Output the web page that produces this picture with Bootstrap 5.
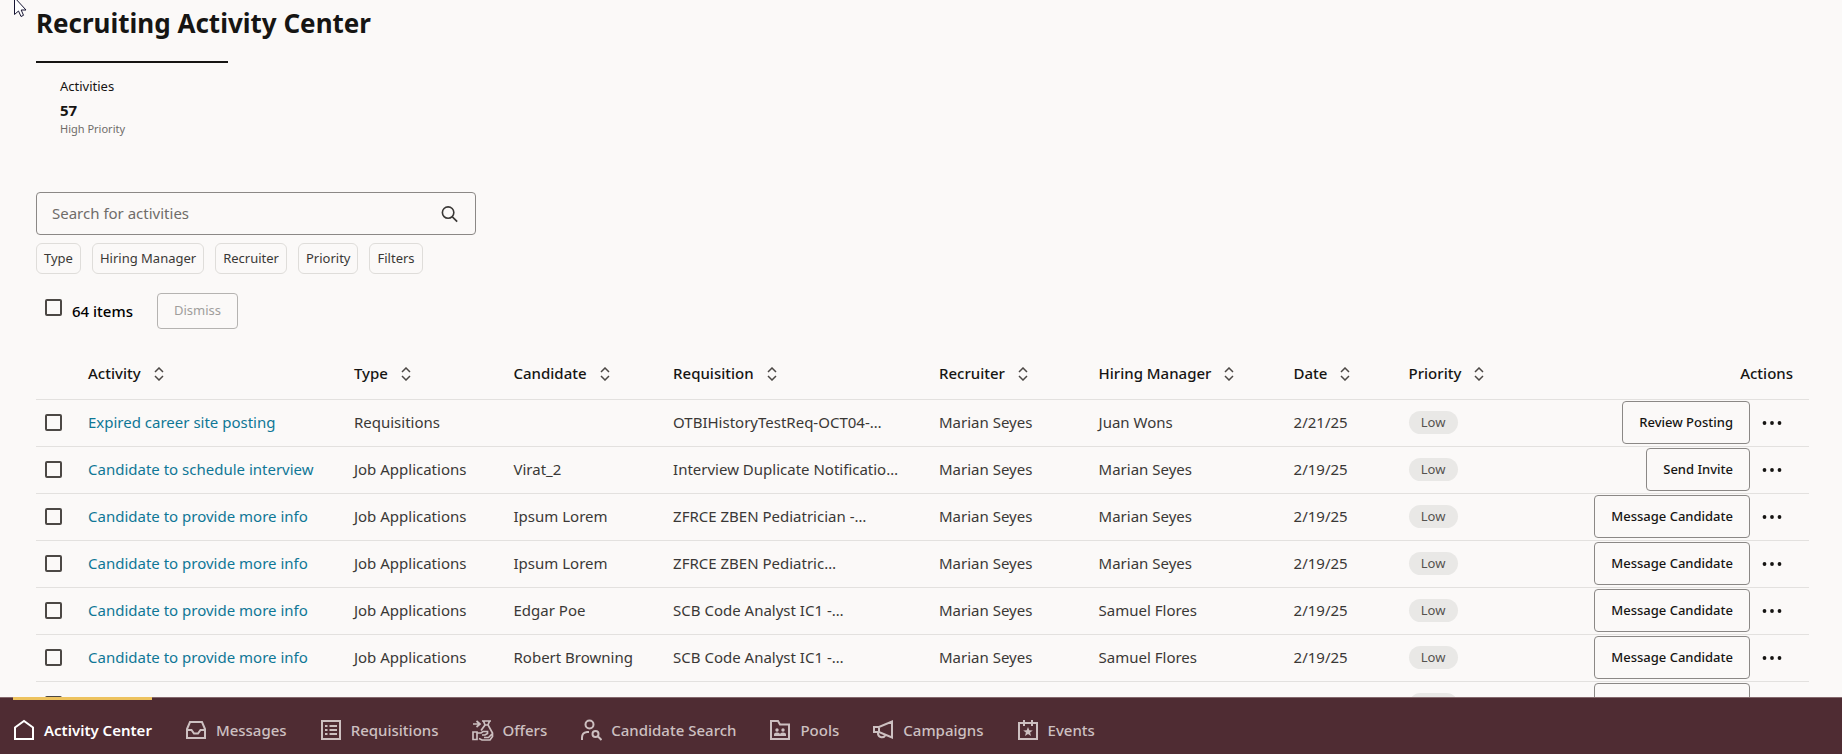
<!DOCTYPE html>
<html lang="en">
<head>
<meta charset="utf-8">
<meta name="viewport" content="width=device-width, initial-scale=1">
<title>Recruiting Activity Center</title>
<link href="https://cdn.jsdelivr.net/npm/bootstrap@5.3.0/dist/css/bootstrap.min.css" rel="stylesheet">
<style>
  body { font-family: "Noto Sans", "Open Sans", sans-serif; font-size: 15px; line-height: 20px; color: #161513; background: #fbf9f8; }
  main { padding: 5px 33px 0 36px; min-height: 0; }
  .page-title { font-size: 26px; line-height: 36px; font-weight: 700; margin-bottom: 20px; }
  .metric { width: 192px; border-top: 2px solid #161513; padding: 13px 24px 0; margin-bottom: 55px; }
  .metric-label { font-size: 13px; line-height: 20px; }
  .metric-value { font-size: 15px; line-height: 20px; font-weight: 700; margin-top: 4px; }
  .metric-note { font-size: 11px; line-height: 16px; margin-top: 1px; color: #6f6c69; }
  .search-box { width: 440px; max-width: 100%; height: 43px; border: 1px solid #8b8886; border-radius: 4px; padding: 0 16px 0 15px; margin-bottom: 8px; }
  .search-box input { font-size: 15px; background: transparent; color: #161513; }
  .search-box input::placeholder { color: #6f6c69; opacity: 1; }
  .search-box svg { width: 20px; height: 20px; }
  .chips { gap: 11px; margin-bottom: 19px; }
  .chip { height: 31px; padding: 0 7px; font-size: 13px; color: #3a3836; border: 1px solid #dfddda; border-radius: 6px; }
  .bulk { padding-left: 9px; margin-bottom: 20px; }
  .tick { appearance: none; display: block; width: 17px; height: 17px; margin: 0; border: 2px solid #4c4845; border-radius: 2px; background: transparent; }
  .tick:checked { background: #4c4845; }
  .bulk .tick { margin-bottom: 8px; }
  .bulk label { font-weight: 500; margin: 0 24px 0 10px; color: #000; }
  .btn-line { height: 43px; padding: 0 16px; font-size: 13px; font-weight: 500; color: #161513; border: 1px solid #8b8886; border-radius: 4px; }
  .btn-line:disabled { height: 36px; font-weight: 400; color: #a09e9c; border-color: #b5b3b1; opacity: 1; }
  .activity-grid { table-layout: fixed; min-width: 1240px; margin: 0; --bs-table-bg: transparent; --bs-table-color: #3a3836; color: #3a3836; }
  .activity-grid > :not(caption) > * > * { padding: 0 16px 2px; height: 47px; vertical-align: middle; border-bottom: 1px solid #e3e1df; white-space: nowrap; }
  .activity-grid > thead > tr > th { height: 50px; font-weight: 500; color: #161513; }
  .activity-grid > tbody > tr > td:first-child { padding: 0 9px; }
  .activity-grid > tbody > tr > td:nth-child(9) { padding-bottom: 0; }
  .activity-grid > tbody > tr > td:last-child { padding: 0 15px 0 0; }
  .activity-grid a { color: #0f7796; text-decoration: none; }
  .sort { width: 10px; height: 14px; margin-left: 9px; padding: 0; border: 0; background: none; display: inline-flex; vertical-align: -2px; }
  .level { display: block; width: 49px; height: 23px; text-align: center; border-radius: 12px; font-size: 13px; line-height: 23px; background: #e9e8e6; color: #55524f; }
  .more { display: flex; align-items: center; justify-content: center; border: 0; background: none; padding: 0; width: 44px; height: 43px; }
  .bottom-nav { height: 57px; flex: none; background: #4f2c33; border-top: 1px solid #85696d; padding-left: 13px; gap: 33px; }
  .bottom-nav a { position: relative; color: #cdc0c1; font-weight: 500; text-decoration: none; gap: 9px; padding-top: 7px; }
  .bottom-nav a.active { color: #fff; font-weight: 600; }
  .bottom-nav a.active::before { content: ""; position: absolute; left: 0; right: 0; top: -1px; height: 3px; background: #edc25e; }
  .bottom-nav svg { width: 22px; height: 22px; }
  .pointer { position: absolute; left: 14px; top: -3px; }
</style>
</head>
<body class="vh-100 d-flex flex-column overflow-hidden">

<svg class="d-none" aria-hidden="true">
  <symbol id="sort" viewBox="0 0 10 14"><path d="M1 5l4-4 4 4M1 9l4 4 4-4" fill="none" stroke="#4c4845" stroke-width="1.5"/></symbol>
  <symbol id="dots" viewBox="0 0 20 6"><circle cx="2.500" cy="3" r="1.900" fill="#161513"/><circle cx="10" cy="3" r="1.900" fill="#161513"/><circle cx="17.500" cy="3" r="1.900" fill="#161513"/></symbol>
</svg>

<main class="flex-grow-1 overflow-hidden">
  <h1 class="page-title">Recruiting Activity Center</h1>

  <section class="metric">
    <div class="metric-label">Activities</div>
    <div class="metric-value">57</div>
    <div class="metric-note">High Priority</div>
  </section>

  <div class="search-box d-flex align-items-center">
    <input class="form-control border-0 shadow-none p-0" type="text" placeholder="Search for activities" aria-label="Search for activities">
    <svg viewBox="0 0 20 20" fill="none" stroke="#3a3836" stroke-width="1.7" aria-hidden="true"><circle cx="8.500" cy="8.500" r="6"/><path d="M13 13l5 5"/></svg>
  </div>

  <div class="chips d-flex flex-wrap">
    <button type="button" class="btn chip">Type</button>
    <button type="button" class="btn chip">Hiring Manager</button>
    <button type="button" class="btn chip">Recruiter</button>
    <button type="button" class="btn chip">Priority</button>
    <button type="button" class="btn chip">Filters</button>
  </div>

  <div class="bulk d-flex align-items-center">
    <input class="tick" type="checkbox" id="all-items">
    <label for="all-items">64 items</label>
    <button type="button" class="btn btn-line" disabled>Dismiss</button>
  </div>

  <table class="table activity-grid">
    <colgroup>
      <col style="width:36px"><col style="width:15%"><col style="width:9%"><col style="width:9%"><col style="width:15%"><col style="width:9%"><col style="width:11%"><col style="width:115px"><col>
      <col style="width:240px">
    </colgroup>
    <thead>
      <tr>
        <th class="p-0" aria-label="Select"></th>
        <th scope="col">Activity <button class="sort" aria-label="Sort by activity"><svg width="10" height="14"><use href="#sort"/></svg></button></th>
        <th scope="col">Type <button class="sort" aria-label="Sort by type"><svg width="10" height="14"><use href="#sort"/></svg></button></th>
        <th scope="col">Candidate <button class="sort" aria-label="Sort by candidate"><svg width="10" height="14"><use href="#sort"/></svg></button></th>
        <th scope="col">Requisition <button class="sort" aria-label="Sort by requisition"><svg width="10" height="14"><use href="#sort"/></svg></button></th>
        <th scope="col">Recruiter <button class="sort" aria-label="Sort by recruiter"><svg width="10" height="14"><use href="#sort"/></svg></button></th>
        <th scope="col">Hiring Manager <button class="sort" aria-label="Sort by hiring manager"><svg width="10" height="14"><use href="#sort"/></svg></button></th>
        <th scope="col">Date <button class="sort" aria-label="Sort by date"><svg width="10" height="14"><use href="#sort"/></svg></button></th>
        <th scope="col">Priority <button class="sort" aria-label="Sort by priority"><svg width="10" height="14"><use href="#sort"/></svg></button></th>
        <th scope="col" class="text-end">Actions</th>
      </tr>
    </thead>
    <tbody>
      <tr>
        <td><input class="tick" type="checkbox" aria-label="Select row 1"></td>
        <td><a href="#">Expired career site posting</a></td><td>Requisitions</td><td></td><td>OTBIHistoryTestReq-OCT04-…</td><td>Marian Seyes</td><td>Juan Wons</td><td>2/21/25</td>
        <td><span class="level">Low</span></td>
        <td><div class="d-flex justify-content-end"><button type="button" class="btn btn-line">Review Posting</button><button type="button" class="more" aria-label="More actions"><svg width="20" height="6"><use href="#dots"/></svg></button></div></td>
      </tr>
      <tr>
        <td><input class="tick" type="checkbox" aria-label="Select row 2"></td>
        <td><a href="#">Candidate to schedule interview</a></td><td>Job Applications</td><td>Virat_2</td><td>Interview Duplicate Notificatio…</td><td>Marian Seyes</td><td>Marian Seyes</td><td>2/19/25</td>
        <td><span class="level">Low</span></td>
        <td><div class="d-flex justify-content-end"><button type="button" class="btn btn-line">Send Invite</button><button type="button" class="more" aria-label="More actions"><svg width="20" height="6"><use href="#dots"/></svg></button></div></td>
      </tr>
      <tr>
        <td><input class="tick" type="checkbox" aria-label="Select row 3"></td>
        <td><a href="#">Candidate to provide more info</a></td><td>Job Applications</td><td>Ipsum Lorem</td><td>ZFRCE ZBEN Pediatrician -…</td><td>Marian Seyes</td><td>Marian Seyes</td><td>2/19/25</td>
        <td><span class="level">Low</span></td>
        <td><div class="d-flex justify-content-end"><button type="button" class="btn btn-line">Message Candidate</button><button type="button" class="more" aria-label="More actions"><svg width="20" height="6"><use href="#dots"/></svg></button></div></td>
      </tr>
      <tr>
        <td><input class="tick" type="checkbox" aria-label="Select row 4"></td>
        <td><a href="#">Candidate to provide more info</a></td><td>Job Applications</td><td>Ipsum Lorem</td><td>ZFRCE ZBEN Pediatric…</td><td>Marian Seyes</td><td>Marian Seyes</td><td>2/19/25</td>
        <td><span class="level">Low</span></td>
        <td><div class="d-flex justify-content-end"><button type="button" class="btn btn-line">Message Candidate</button><button type="button" class="more" aria-label="More actions"><svg width="20" height="6"><use href="#dots"/></svg></button></div></td>
      </tr>
      <tr>
        <td><input class="tick" type="checkbox" aria-label="Select row 5"></td>
        <td><a href="#">Candidate to provide more info</a></td><td>Job Applications</td><td>Edgar Poe</td><td>SCB Code Analyst IC1 -…</td><td>Marian Seyes</td><td>Samuel Flores</td><td>2/19/25</td>
        <td><span class="level">Low</span></td>
        <td><div class="d-flex justify-content-end"><button type="button" class="btn btn-line">Message Candidate</button><button type="button" class="more" aria-label="More actions"><svg width="20" height="6"><use href="#dots"/></svg></button></div></td>
      </tr>
      <tr>
        <td><input class="tick" type="checkbox" aria-label="Select row 6"></td>
        <td><a href="#">Candidate to provide more info</a></td><td>Job Applications</td><td>Robert Browning</td><td>SCB Code Analyst IC1 -…</td><td>Marian Seyes</td><td>Samuel Flores</td><td>2/19/25</td>
        <td><span class="level">Low</span></td>
        <td><div class="d-flex justify-content-end"><button type="button" class="btn btn-line">Message Candidate</button><button type="button" class="more" aria-label="More actions"><svg width="20" height="6"><use href="#dots"/></svg></button></div></td>
      </tr>
      <tr>
        <td><input class="tick" type="checkbox" aria-label="Select row 7"></td>
        <td></td><td></td><td></td><td></td><td></td><td></td><td></td>
        <td><span class="level"></span></td>
        <td><div class="d-flex justify-content-end"><button type="button" class="btn btn-line">Message Candidate</button><button type="button" class="more" aria-label="More actions"></button></div></td>
      </tr>
    </tbody>
  </table>
</main>

<nav class="bottom-nav d-flex" aria-label="Recruiting">
  <a href="#" class="active d-flex align-items-center">
    <svg viewBox="0 0 22 22" fill="none" stroke="currentColor" stroke-width="2"><path d="M2 20V8.500L11 2l9 6.500V20z"/></svg>Activity Center</a>
  <a href="#" class="d-flex align-items-center">
    <svg viewBox="0 0 22 22" fill="none" stroke="currentColor" stroke-width="2"><path d="M2 19V10l3-7h12l3 7v9zM2 11h4.500l2.500 3.500h4l2.500-3.500H20"/></svg>Messages</a>
  <a href="#" class="d-flex align-items-center">
    <svg viewBox="0 0 22 22" fill="none" stroke="currentColor" stroke-width="2"><path d="M2 2h18v18H2zM5 7h2.500M5 11h2.500M5 15h2.500M9.500 7H17M9.500 11H17M9.500 15H17"/></svg>Requisitions</a>
  <a href="#" class="d-flex align-items-center">
    <svg viewBox="0 0 22 22" fill="none" stroke="currentColor" stroke-width="1.700"><path d="M1 5h6M4.500 2L8 5 4.500 8M10 2h9M11.500 2l1.500 4-4 5.500M17.500 2L16 6l4.500 8v3.500L18 21h-8l-3-1.500M12.500 6h4M1 13h4v7.500H1zM5 14h4l2-1.500h4.500v2L13 16h-3M12 18.500h4.500l4-4"/></svg>Offers</a>
  <a href="#" class="d-flex align-items-center">
    <svg viewBox="0 0 22 22" fill="none" stroke="currentColor" stroke-width="2"><circle cx="9.500" cy="5.500" r="4"/><path d="M2 21v-2.500q0-5 5-5.500h2M18 17.500l3.500 3.500"/><circle cx="15.500" cy="15" r="3"/></svg>Candidate Search</a>
  <a href="#" class="d-flex align-items-center">
    <svg viewBox="0 0 22 22" fill="none" stroke="currentColor" stroke-width="2"><path d="M2 20V2h7l2 3.500h9V20z"/><g fill="currentColor" stroke="none"><circle cx="8" cy="11" r="1.700"/><circle cx="14" cy="11" r="1.700"/><path d="M5 17v-1.500q0-2 3-2t3 2q0-2 3-2t3 2V17z"/></g></svg>Pools</a>
  <a href="#" class="d-flex align-items-center">
    <svg viewBox="0 0 22 22" fill="none" stroke="currentColor" stroke-width="2"><path d="M20 2.500v16L7 13H2V8h5zM7 8v5M6 13v2a4 4 0 0 0 7.500 1"/></svg>Campaigns</a>
  <a href="#" class="d-flex align-items-center">
    <svg viewBox="0 0 22 22" fill="none" stroke="currentColor" stroke-width="2"><path d="M2 4h18v16H2zM7 1v6M15 1v6"/><path fill="currentColor" stroke="none" d="M11 8l1.300 3.200 3.500.2-2.700 2.200.9 3.400-3-1.900-3 1.900.9-3.400-2.700-2.200 3.500-.2z"/></svg>Events</a>
</nav>

<svg class="pointer" width="13" height="20" viewBox="0 0 13 20" aria-hidden="true"><path d="M.5.500v17l4-3.500 2.500 5.500 2.500-1.200L7.200 13H12z" fill="#fff" stroke="#161533"/></svg>
<script src="https://cdn.jsdelivr.net/npm/bootstrap@5.3.0/dist/js/bootstrap.bundle.min.js"></script>
</body>
</html>
